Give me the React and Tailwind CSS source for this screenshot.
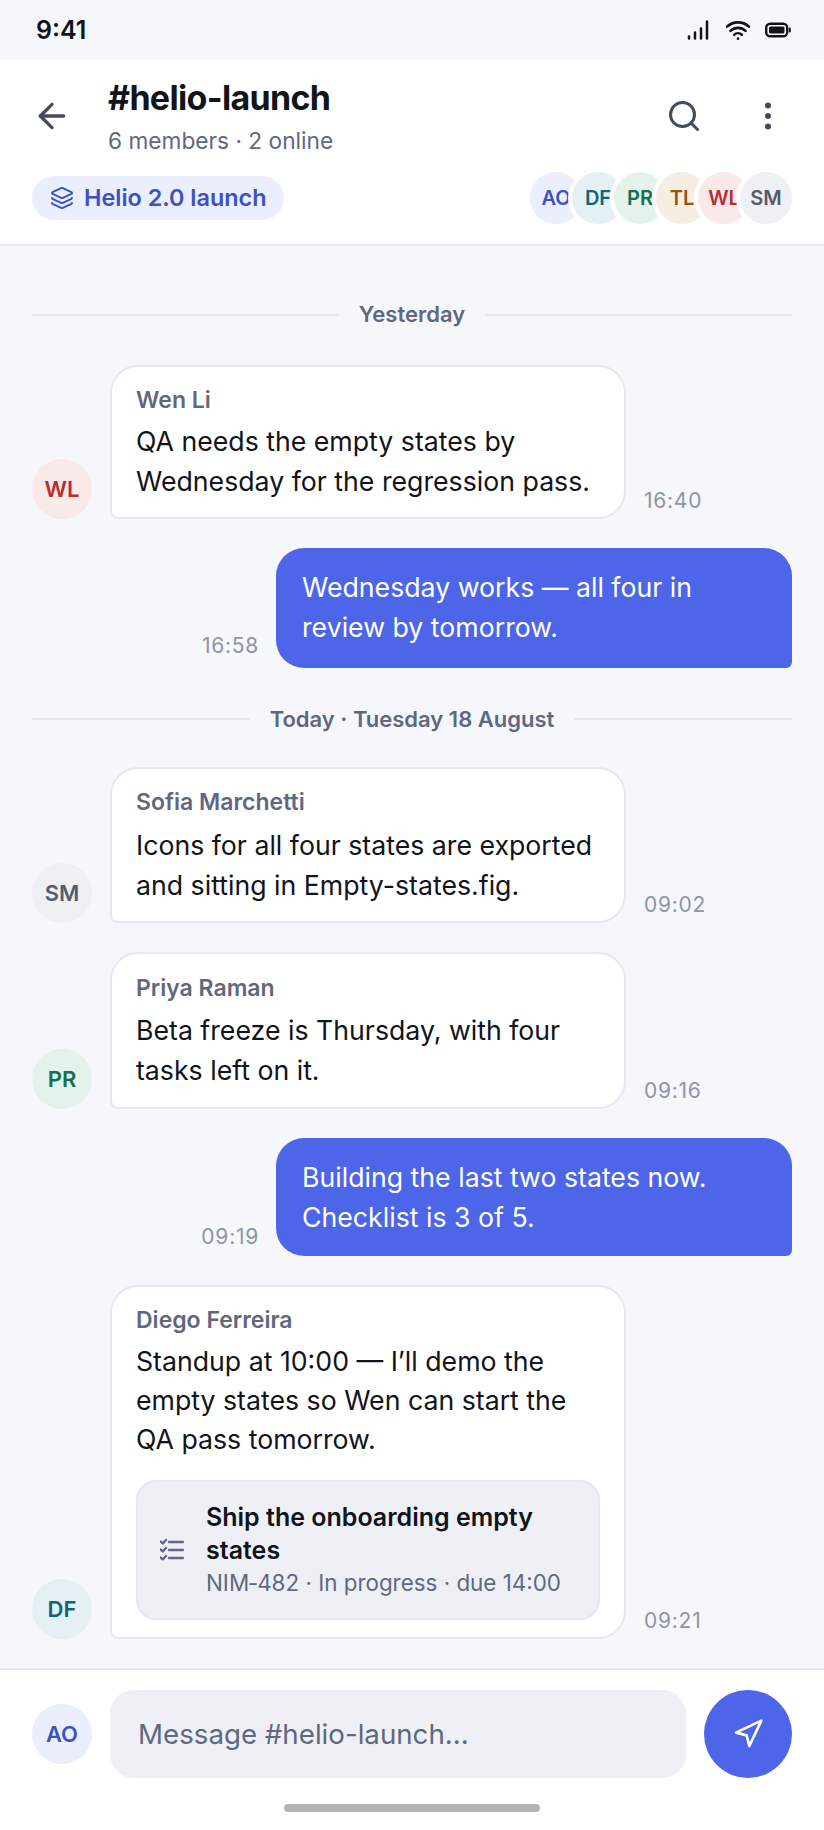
import { ArrowLeft, Search, EllipsisVertical, Layers, Navigation, Wifi } from 'lucide-react';

const font = { fontFamily: 'Inter, sans-serif' };

const people = {
  AO: 'bg-[#ebeefc] text-[#3d51c4]',
  DF: 'bg-[#e4f0f3] text-[#0f6577]',
  PR: 'bg-[#e5f2ec] text-[#137050]',
  TL: 'bg-[#f7eee3] text-[#92570f]',
  WL: 'bg-[#fae9e9] text-[#b92c33]',
  SM: 'bg-[#eff0f3] text-[#535c6e]',
};

function Avatar({ who }) {
  return (
    <div className={`w-[60px] h-[60px] shrink-0 rounded-full flex items-center justify-center text-[22px] font-semibold ${people[who]}`}>
      {who}
    </div>
  );
}

function DateLine({ label, className }) {
  return (
    <div className={`shrink-0 flex items-center gap-[20px] ${className}`}>
      <div className="flex-1 h-[2px] bg-[#e4e8f1]" />
      <span className="text-[22px] font-semibold text-[#5f6880]">{label}</span>
      <div className="flex-1 h-[2px] bg-[#e4e8f1]" />
    </div>
  );
}

function Incoming({ who, name, time, pad = 'pt-[19px] pb-[16px]', gap = 'mb-[7px]', lines = 'leading-[40px]', children }) {
  return (
    <div className="flex items-end gap-[18px]">
      <Avatar who={who} />
      <div className={`w-[516px] bg-white border-2 border-[#e4e8f1] rounded-[28px] rounded-bl-[8px] px-[24px] ${pad}`}>
        <div className={`text-[23px] leading-[28px] font-semibold text-[#5f6880] ${gap}`}>{name}</div>
        <div className={`text-[26.7px] text-[#11141a] ${lines}`}>{children}</div>
      </div>
      <span className="text-[21px] leading-[28px] tracking-[0.75px] text-[#8d95a8] mb-[4px]">{time}</span>
    </div>
  );
}

function Outgoing({ time, pad, timeGap, children }) {
  return (
    <div className="flex items-end justify-end gap-[17px]">
      <span className={`text-[21px] leading-[28px] tracking-[0.75px] text-[#8d95a8] ${timeGap}`}>{time}</span>
      <div className={`w-[516px] bg-[#4d65e8] text-white rounded-[28px] rounded-br-[6px] px-[26px] text-[26.7px] leading-[40px] ${pad}`}>
        {children}
      </div>
    </div>
  );
}

function TaskIcon() {
  return (
    <svg width="24" height="24" viewBox="0 0 24 24" fill="none" stroke="#5f6880" strokeLinecap="round" strokeLinejoin="round" className="shrink-0">
      <path d="M9 4h14M9 12h14M9 20h14" strokeWidth="2.400" />
      <path d="M0.800 3.500l2 2L6 2M0.800 11.500l2 2L6 10M0.800 19.500l2 2L6 18" strokeWidth="2.400" />
    </svg>
  );
}

function SignalBars() {
  return (
    <svg width="22" height="20" viewBox="0 0 22 20" fill="none" stroke="#11141a" strokeWidth="2.500" strokeLinecap="round">
      <path d="M2 18.500v-2M8 18.500v-6M14 18.500v-10M20 18.500V1.500" />
    </svg>
  );
}

function Battery() {
  return (
    <svg width="26" height="16" viewBox="0 0 26 16" fill="none">
      <rect x="1.200" y="1.700" width="21" height="12.600" rx="4" stroke="#11141a" strokeWidth="2.400" />
      <rect x="4" y="4.500" width="15.500" height="7" rx="1.500" fill="#11141a" />
      <path d="M24.800 6.500v3" stroke="#11141a" strokeWidth="2" strokeLinecap="round" />
    </svg>
  );
}

export default function App() {
  return (
    <div className="w-[824px] h-[1830px] flex flex-col bg-[#f5f7fb] overflow-hidden" style={font}>
      <div className="h-[60px] shrink-0 flex items-center justify-between pl-[36px] pr-[33px]">
        <span className="text-[25px] font-semibold text-[#11141a] pt-[2px]">9:41</span>
        <div className="flex items-center">
          <SignalBars />
          <Wifi size={26} strokeWidth={2.4} className="text-[#11141a] ml-[16px] mr-[14px]" />
          <Battery />
        </div>
      </div>

      <header className="h-[186px] shrink-0 bg-white border-b-2 border-[#e4e8f1] px-[32px] flex flex-col">
        <div className="flex items-center h-[112px] shrink-0">
          <ArrowLeft size={40} strokeWidth={2} className="text-[#434b5e] shrink-0" />
          <div className="ml-[36px] flex-1">
            <div className="text-[34px] leading-[44px] font-bold tracking-[-0.02em] text-[#11141a]">#helio-launch</div>
            <div className="text-[22.7px] leading-[32px] mt-[5px] text-[#5f6880]">6 members · 2 online</div>
          </div>
          <Search size={36} strokeWidth={2} className="text-[#434b5e]" />
          <EllipsisVertical size={36} strokeWidth={2} className="text-[#434b5e] ml-[48px] mr-[6px]" />
        </div>
        <div className="flex items-center justify-between">
          <div className="h-[44px] rounded-full bg-[#ebeefc] flex items-center gap-[10px] pl-[18px] pr-[17px] text-[23.4px] font-semibold text-[#3d51c4]">
            <Layers size={24} strokeWidth={2} />
            Helio 2.0 launch
          </div>
          <div className="flex">
            {Object.keys(people).map((who, i) => (
              <div
                key={who}
                className={`w-[52px] h-[52px] rounded-full ring-4 ring-white flex items-center justify-center text-[20px] font-semibold ${people[who]} ${i > 0 ? 'ml-[-10px]' : ''}`}
              >
                {who}
              </div>
            ))}
          </div>
        </div>
      </header>

      <main className="flex-1 min-h-0 overflow-hidden px-[32px] pt-[47px] flex flex-col gap-[29px]">
        <DateLine label="Yesterday" className="h-[43px]" />
        <Incoming who="WL" name="Wen Li" time="16:40">
          QA needs the empty states by Wednesday for the regression pass.
        </Incoming>
        <Outgoing time="16:58" pad="pt-[19px] pb-[21px]" timeGap="mb-[8px]">
          Wednesday works — all four in review by tomorrow.
        </Outgoing>
        <DateLine label="Today · Tuesday 18 August" className="h-[41px] pt-[3px]" />
        <Incoming who="SM" name="Sofia Marchetti" time="09:02" gap="mb-[9px]">
          Icons for all four states are exported and sitting in Empty-states.fig.
        </Incoming>
        <Incoming who="PR" name="Priya Raman" time="09:16" pad="pt-[20px] pb-[17px]" gap="mb-[8px]">
          Beta freeze is Thursday, with four tasks left on it.
        </Incoming>
        <Outgoing time="09:19" pad="pt-[19px] pb-[19px]" timeGap="mb-[5px]">
          Building the last two states now. Checklist is 3 of 5.
        </Outgoing>
        <Incoming who="DF" name="Diego Ferreira" time="09:21" pad="pt-[19px] pb-[15px]" gap="mb-[8px]" lines="leading-[39px]">
          Standup at 10:00 — I’ll demo the empty states so Wen can start the QA pass tomorrow.
          <div className="mt-[21px] mb-[2px] bg-[#eef0f5] border-2 border-[#e4e8f1] rounded-[20px] pl-[22px] pr-[22px] pt-[19px] pb-[20px] flex items-center gap-[22px]">
            <TaskIcon />
            <div>
              <div className="text-[25px] leading-[33px] font-semibold text-[#11141a]">Ship the onboarding empty states</div>
              <div className="text-[22.4px] leading-[30px] text-[#5f6880] mt-[1px]">NIM‑482 · In progress · due 14:00</div>
            </div>
          </div>
        </Incoming>
      </main>

      <footer className="h-[162px] shrink-0 bg-white border-t-2 border-[#e4e8f1] px-[32px] pt-[20px] flex flex-col">
        <div className="flex items-center gap-[18px]">
          <Avatar who="AO" />
          <div className="flex-1 h-[88px] rounded-[24px] bg-[#eef0f5] flex items-center px-[28px] pt-[2px] text-[27.7px] text-[#5f6880]">
            Message #helio-launch...
          </div>
          <div className="w-[88px] h-[88px] rounded-full bg-[#4d65e8] flex items-center justify-center text-white">
            <Navigation size={32} strokeWidth={2} />
          </div>
        </div>
        <div className="mt-[26px] mx-auto w-[256px] h-[8px] rounded-full bg-[#b4b5b8]" />
      </footer>
    </div>
  );
}
